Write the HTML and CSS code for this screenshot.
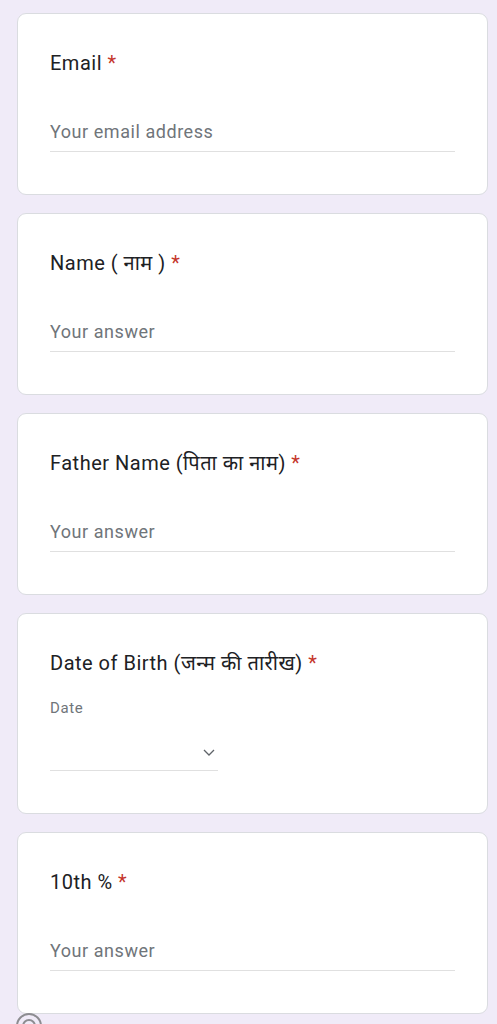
FILE: index.html
```html
<!DOCTYPE html>
<html lang="en">
<head>
    <meta charset="UTF-8">
    <title>Form</title>
    <link rel="stylesheet" href="styles.css">
</head>
<body>
    <div class="form">
        <div class="card">
            <div class="title">Email <span class="req">*</span></div>
            <div class="answer">Your email address</div>
        </div>

        <div class="card">
            <div class="title">Name ( नाम ) <span class="req">*</span></div>
            <div class="answer">Your answer</div>
        </div>

        <div class="card">
            <div class="title">Father Name (पिता का नाम) <span class="req">*</span></div>
            <div class="answer">Your answer</div>
        </div>

        <div class="card">
            <div class="title">Date of Birth (जन्म की तारीख) <span class="req">*</span></div>
            <div class="sublabel">Date</div>
            <div class="date-select">
                <svg class="chevron" width="12" height="7" viewBox="0 0 12 7">
                    <path d="M1 1l5 5 5-5" fill="none" stroke="#5f6368" stroke-width="1.3"/>
                </svg>
            </div>
        </div>

        <div class="card">
            <div class="title">10th % <span class="req">*</span></div>
            <div class="answer">Your answer</div>
        </div>
    </div>

    <svg class="float-icon" width="28" height="28" viewBox="0 0 28 28">
        <circle cx="14" cy="14" r="12" fill="none" stroke="#8d8d91" stroke-width="2"/>
        <circle cx="14" cy="14" r="6" fill="none" stroke="#8d8d91" stroke-width="2"/>
    </svg>
</body>
</html>
```

FILE: styles.css
```css
body {
    margin: 0;
    background-color: #f0ebf8;
    font-family: Roboto, "Noto Sans", sans-serif;
    color: #202124;
}

.form {
    display: flex;
    flex-direction: column;
    gap: 18px;
    padding: 13px 9px 0 17px;
}

.card {
    background: #fff;
    border: 1px solid #dadce0;
    border-radius: 9px;
    padding: 35px 32px 42px 32px;
}

.title {
    font-size: 20px;
    line-height: 28px;
    letter-spacing: 0.5px;
}

.req {
    color: #c5362c;
}

.answer {
    margin-top: 43px;
    font-size: 18px;
    line-height: 24px;
    letter-spacing: 0.55px;
    color: #70757a;
    padding-bottom: 7px;
    border-bottom: 1px solid #e0e0e0;
}

.sublabel {
    margin-top: 21px;
    font-size: 15px;
    line-height: 20px;
    letter-spacing: 0.6px;
    color: #70757a;
}

.date-select {
    margin-top: 17px;
    width: 168px;
    height: 36px;
    border-bottom: 1px solid #e0e0e0;
    display: flex;
    align-items: center;
    justify-content: flex-end;
    padding-right: 3px;
    box-sizing: border-box;
}

.chevron {
    display: block;
}

.float-icon {
    position: absolute;
    left: 15px;
    top: 1012px;
}
```
